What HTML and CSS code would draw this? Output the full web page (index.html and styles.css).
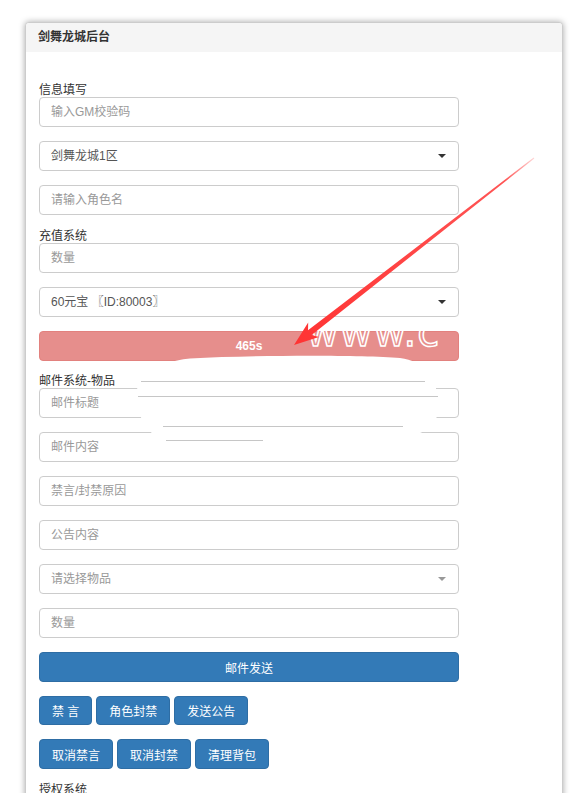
FILE: index.html
```html
<!DOCTYPE html>
<html lang="zh-CN">
<head>
    <meta charset="UTF-8">
    <meta name="viewport" content="width=device-width, initial-scale=1.0">
    <title>剑舞龙城后台</title>
    <link rel="stylesheet" href="styles.css">
</head>
<body>
    <div class="panel">
        <div class="panel-heading">剑舞龙城后台</div>
        <div class="panel-body">
            <form class="gm-form" onsubmit="return false">
                <label class="group-title">信息填写</label>
                <input class="field" type="text" placeholder="输入GM校验码">
                <div class="select-wrap">
                    <select class="field">
                        <option>剑舞龙城1区</option>
                        <option>剑舞龙城2区</option>
                    </select>
                </div>
                <input class="field" type="text" placeholder="请输入角色名">

                <label class="group-title">充值系统</label>
                <input class="field" type="text" placeholder="数量">
                <div class="select-wrap">
                    <select class="field">
                        <option>60元宝 〖ID:80003〗</option>
                    </select>
                </div>
                <button class="btn btn-danger btn-block" disabled>465s</button>

                <label class="group-title">邮件系统-物品</label>
                <input class="field" type="text" placeholder="邮件标题">
                <input class="field" type="text" placeholder="邮件内容">
                <input class="field" type="text" placeholder="禁言/封禁原因">
                <input class="field" type="text" placeholder="公告内容">
                <div class="select-wrap muted">
                    <select class="field empty">
                        <option>请选择物品</option>
                    </select>
                </div>
                <input class="field" type="text" placeholder="数量">
                <button class="btn btn-primary btn-block">邮件发送</button>

                <div class="btn-row">
                    <button class="btn btn-primary">禁 言</button>
                    <button class="btn btn-primary">角色封禁</button>
                    <button class="btn btn-primary">发送公告</button>
                </div>
                <div class="btn-row">
                    <button class="btn btn-primary">取消禁言</button>
                    <button class="btn btn-primary">取消封禁</button>
                    <button class="btn btn-primary">清理背包</button>
                </div>

                <label class="group-title">授权系统</label>
                <input class="field" type="text" placeholder="授权账号">
            </form>
        </div>
    </div>

    <!-- screenshot markup: arrow + smudged watermark -->
    <svg class="overlay" width="578" height="793" viewBox="0 0 578 793">
        <defs>
            <linearGradient id="fade" x1="534" y1="158" x2="294" y2="345" gradientUnits="userSpaceOnUse">
                <stop offset="0" stop-color="#ffd6d6"/>
                <stop offset="0.12" stop-color="#f55"/>
                <stop offset="1" stop-color="#f33"/>
            </linearGradient>
        </defs>
        <text class="mark" x="306" y="346">www.c</text>
        <path class="smudge" d="M190 358.5 C260 355 360 355 400 358 C424 362 436 374 436 388 L438 414 C432 430 418 436 402 437 L340 439 C300 444 250 444 166 443 C150 436 140 420 136 404 C132 384 150 362 190 358.5 Z"/>
        <g class="streaks">
            <line x1="141" y1="381.5" x2="425" y2="381.5"/>
            <line x1="138" y1="396.5" x2="438" y2="396.5"/>
            <line x1="163" y1="426.5" x2="403" y2="426.5"/>
            <line x1="166" y1="440.5" x2="263" y2="440.5"/>
        </g>
        <polygon fill="url(#fade)" points="294,345 319,337 311.6,335.1 534.3,158.4 533.7,157.6 308,330.3 308.2,322.5"/>
    </svg>
</body>
</html>
```

FILE: styles.css
```css
body {
    margin: 0;
    background: #fff;
    font-family: "Liberation Sans", "Noto Sans CJK SC", sans-serif;
    font-size: 12px;
    color: #333;
}

.panel {
    box-sizing: border-box;
    width: 538px;
    margin: 22px 0 0 25px;
    border: 1px solid #ccc;
    border-radius: 4px;
    background: #fff;
    box-shadow: 0 0 6px rgba(0, 0, 0, 0.35);
}
.panel-heading {
    height: 29px;
    line-height: 29px;
    padding: 0 12px;
    background: #f5f5f5;
    border-radius: 3px 3px 0 0;
    font-weight: bold;
    font-size: 12px;
    color: #333;
}
.panel-body {
    padding: 31px 13px 20px;
}

.gm-form {
    display: flex;
    flex-direction: column;
    width: 420px;
}
.group-title {
    display: block;
    height: 14px;
    line-height: 14px;
    font-size: 12px;
    color: #333;
}

.field {
    box-sizing: border-box;
    display: block;
    width: 100%;
    height: 30px;
    margin: 0 0 14px;
    padding: 0 11px;
    border: 1px solid #ccc;
    border-radius: 4px;
    background: #fff;
    font-family: inherit;
    font-size: 12px;
    color: #555;
    outline: none;
}
.field::placeholder { color: #999; }

.select-wrap { position: relative; }
.select-wrap .field {
    appearance: none;
    -webkit-appearance: none;
}
.select-wrap .field.empty { color: #999; }
.select-wrap::after {
    content: "";
    position: absolute;
    right: 13px;
    top: 13px;
    border-top: 4px solid #333;
    border-left: 4px solid transparent;
    border-right: 4px solid transparent;
}
.select-wrap.muted::after { border-top-color: #999; }

.btn {
    box-sizing: border-box;
    height: 30px;
    padding: 0 12px;
    border: 1px solid transparent;
    border-radius: 4px;
    font-family: inherit;
    font-size: 12px;
    color: #fff;
    cursor: pointer;
}
.btn-block {
    width: 100%;
    margin-bottom: 14px;
}
.btn-primary {
    background: #337ab7;
    border-color: #2e6da4;
}
.btn-danger {
    background: #d9534f;
    border-color: #d43f3a;
    font-weight: bold;
}
.btn-danger:disabled {
    opacity: 0.65;
    margin-bottom: 13px;
    cursor: not-allowed;
}

.btn-row {
    display: flex;
    gap: 4px;
    margin-bottom: 14px;
}
.btn-row .btn { height: 29px; }
.btn-row + .btn-row .btn { height: 30px; }

.overlay {
    position: absolute;
    top: 0;
    left: 0;
    pointer-events: none;
}
.mark {
    font-family: "DejaVu Sans", sans-serif;
    font-size: 40px;
    letter-spacing: 1px;
    fill: none;
    stroke: #fff;
    stroke-width: 1.5;
}
.smudge { fill: #fff; }
.streaks line {
    stroke: #c6c6c6;
    stroke-width: 1;
}
```
